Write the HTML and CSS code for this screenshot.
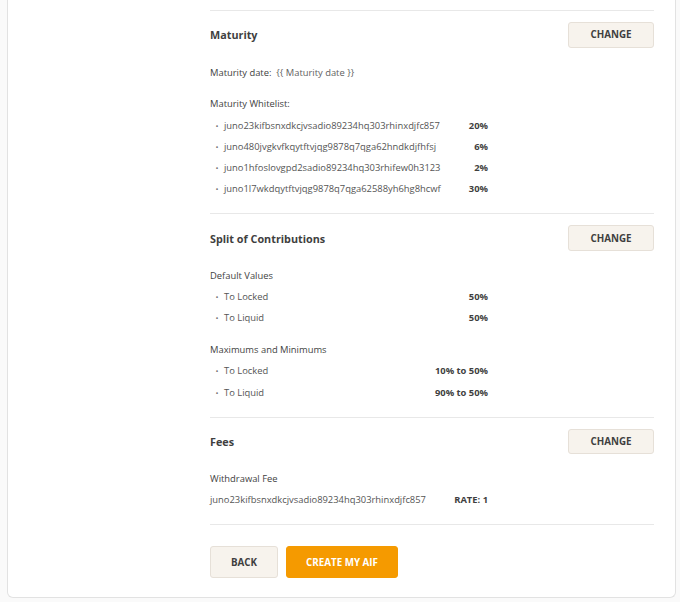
FILE: index.html
```html
<!DOCTYPE html>
<html lang="en">
<head>
<meta charset="utf-8">
<title>Review AIF</title>
<link rel="stylesheet" href="styles.css">
</head>
<body>
<div class="page">
  <div class="card">
    <div class="content">
      <section class="section">
        <div class="section-head">
          <h2 class="section-title">Maturity</h2>
          <button class="btn btn-light btn-change">CHANGE</button>
        </div>
        <div class="section-body">
          <div class="group">
            <div class="row"><span class="label-strong">Maturity date:</span>&nbsp;&nbsp;<span class="muted">{{ Maturity date }}</span></div>
          </div>
          <div class="group">
            <div class="row group-label">Maturity Whitelist:</div>
            <ul class="items">
              <li class="item"><span class="bullet">•</span><span class="item-name">juno23kifbsnxdkcjvsadio89234hq303rhinxdjfc857</span><span class="item-value">20%</span></li>
              <li class="item"><span class="bullet">•</span><span class="item-name">juno480jvgkvfkqytftvjqg9878q7qga62hndkdjfhfsj</span><span class="item-value">6%</span></li>
              <li class="item"><span class="bullet">•</span><span class="item-name">juno1hfoslovgpd2sadio89234hq303rhifew0h3123</span><span class="item-value">2%</span></li>
              <li class="item"><span class="bullet">•</span><span class="item-name">juno1l7wkdqytftvjqg9878q7qga62588yh6hg8hcwf</span><span class="item-value">30%</span></li>
            </ul>
          </div>
        </div>
      </section>

      <section class="section">
        <div class="section-head">
          <h2 class="section-title">Split of Contributions</h2>
          <button class="btn btn-light btn-change">CHANGE</button>
        </div>
        <div class="section-body">
          <div class="group">
            <div class="row group-label">Default Values</div>
            <ul class="items">
              <li class="item"><span class="bullet">•</span><span class="item-name">To Locked</span><span class="item-value">50%</span></li>
              <li class="item"><span class="bullet">•</span><span class="item-name">To Liquid</span><span class="item-value">50%</span></li>
            </ul>
          </div>
          <div class="group">
            <div class="row group-label">Maximums and Minimums</div>
            <ul class="items">
              <li class="item"><span class="bullet">•</span><span class="item-name">To Locked</span><span class="item-value">10% to 50%</span></li>
              <li class="item"><span class="bullet">•</span><span class="item-name">To Liquid</span><span class="item-value">90% to 50%</span></li>
            </ul>
          </div>
        </div>
      </section>

      <section class="section">
        <div class="section-head">
          <h2 class="section-title">Fees</h2>
          <button class="btn btn-light btn-change">CHANGE</button>
        </div>
        <div class="section-body">
          <div class="group">
            <div class="row group-label">Withdrawal Fee</div>
            <div class="item item-flat"><span class="item-name">juno23kifbsnxdkcjvsadio89234hq303rhinxdjfc857</span><span class="item-value">RATE: 1</span></div>
          </div>
        </div>
      </section>

      <div class="actions">
        <button class="btn btn-light btn-back">BACK</button>
        <button class="btn btn-primary btn-create">CREATE MY AIF</button>
      </div>
    </div>
  </div>
</div>
</body>
</html>
```

FILE: styles.css
```css
* { box-sizing: border-box; }

html, body {
  margin: 0;
  padding: 0;
  background: #fafafa;
}

body {
  font-family: "Open Sans", "Noto Sans", sans-serif;
  color: #444;
  font-size: 9.4px;
}

.page {
  padding: 0 4px 4px 7px;
}

.card {
  background: #fff;
  border: 1px solid #e2e2e2;
  border-top: none;
  border-radius: 0 0 6px 6px;
  padding: 10px 21px 19px 202px;
}

.content {
  width: 444px;
}

.section {
  border-top: 1px solid #e8e8e8;
  padding: 11px 0 13.5px;
}

.section-head {
  display: flex;
  align-items: center;
  justify-content: space-between;
  height: 25.5px;
}

.section-title {
  margin: 0;
  font-size: 10.8px;
  font-weight: 700;
  color: #3f3f3f;
}

.section-body {
  margin-top: 14px;
  display: flex;
  flex-direction: column;
  gap: 10.5px;
}

.row {
  line-height: 21.3px;
  height: 21.3px;
}

.label-strong {
  font-weight: 400;
  color: #3f3f3f;
}

.muted {
  color: #5f5f5f;
}

.group-label {
  color: #3f3f3f;
}

.items {
  list-style: none;
  margin: 0;
  padding: 0;
}

.item {
  display: flex;
  align-items: center;
  width: 278px;
  height: 21.3px;
  line-height: 21.3px;
  color: #555;
}

.bullet {
  width: 14px;
  text-align: center;
  font-size: 8px;
  color: #777;
}

.item-name {
  flex: 1;
}

.item-value {
  font-weight: 700;
  color: #3f3f3f;
}

.btn {
  font-family: "Open Sans", "Noto Sans", sans-serif;
  font-weight: 700;
  font-size: 9.8px;
  border-radius: 3px;
  cursor: pointer;
  padding: 0;
  text-align: center;
}

.btn-light {
  background: #f7f3ed;
  border: 1px solid #e6e0d8;
  color: #3f3f3f;
}

.btn-primary {
  background: #f59a00;
  border: 1px solid #f59a00;
  color: #fff;
}

.btn-change {
  width: 86px;
  height: 25.5px;
}

.actions {
  border-top: 1px solid #e8e8e8;
  padding-top: 21px;
  display: flex;
  gap: 8px;
}

.btn-back {
  width: 68px;
  height: 32px;
}

.btn-create {
  width: 112px;
  height: 32px;
}
```
